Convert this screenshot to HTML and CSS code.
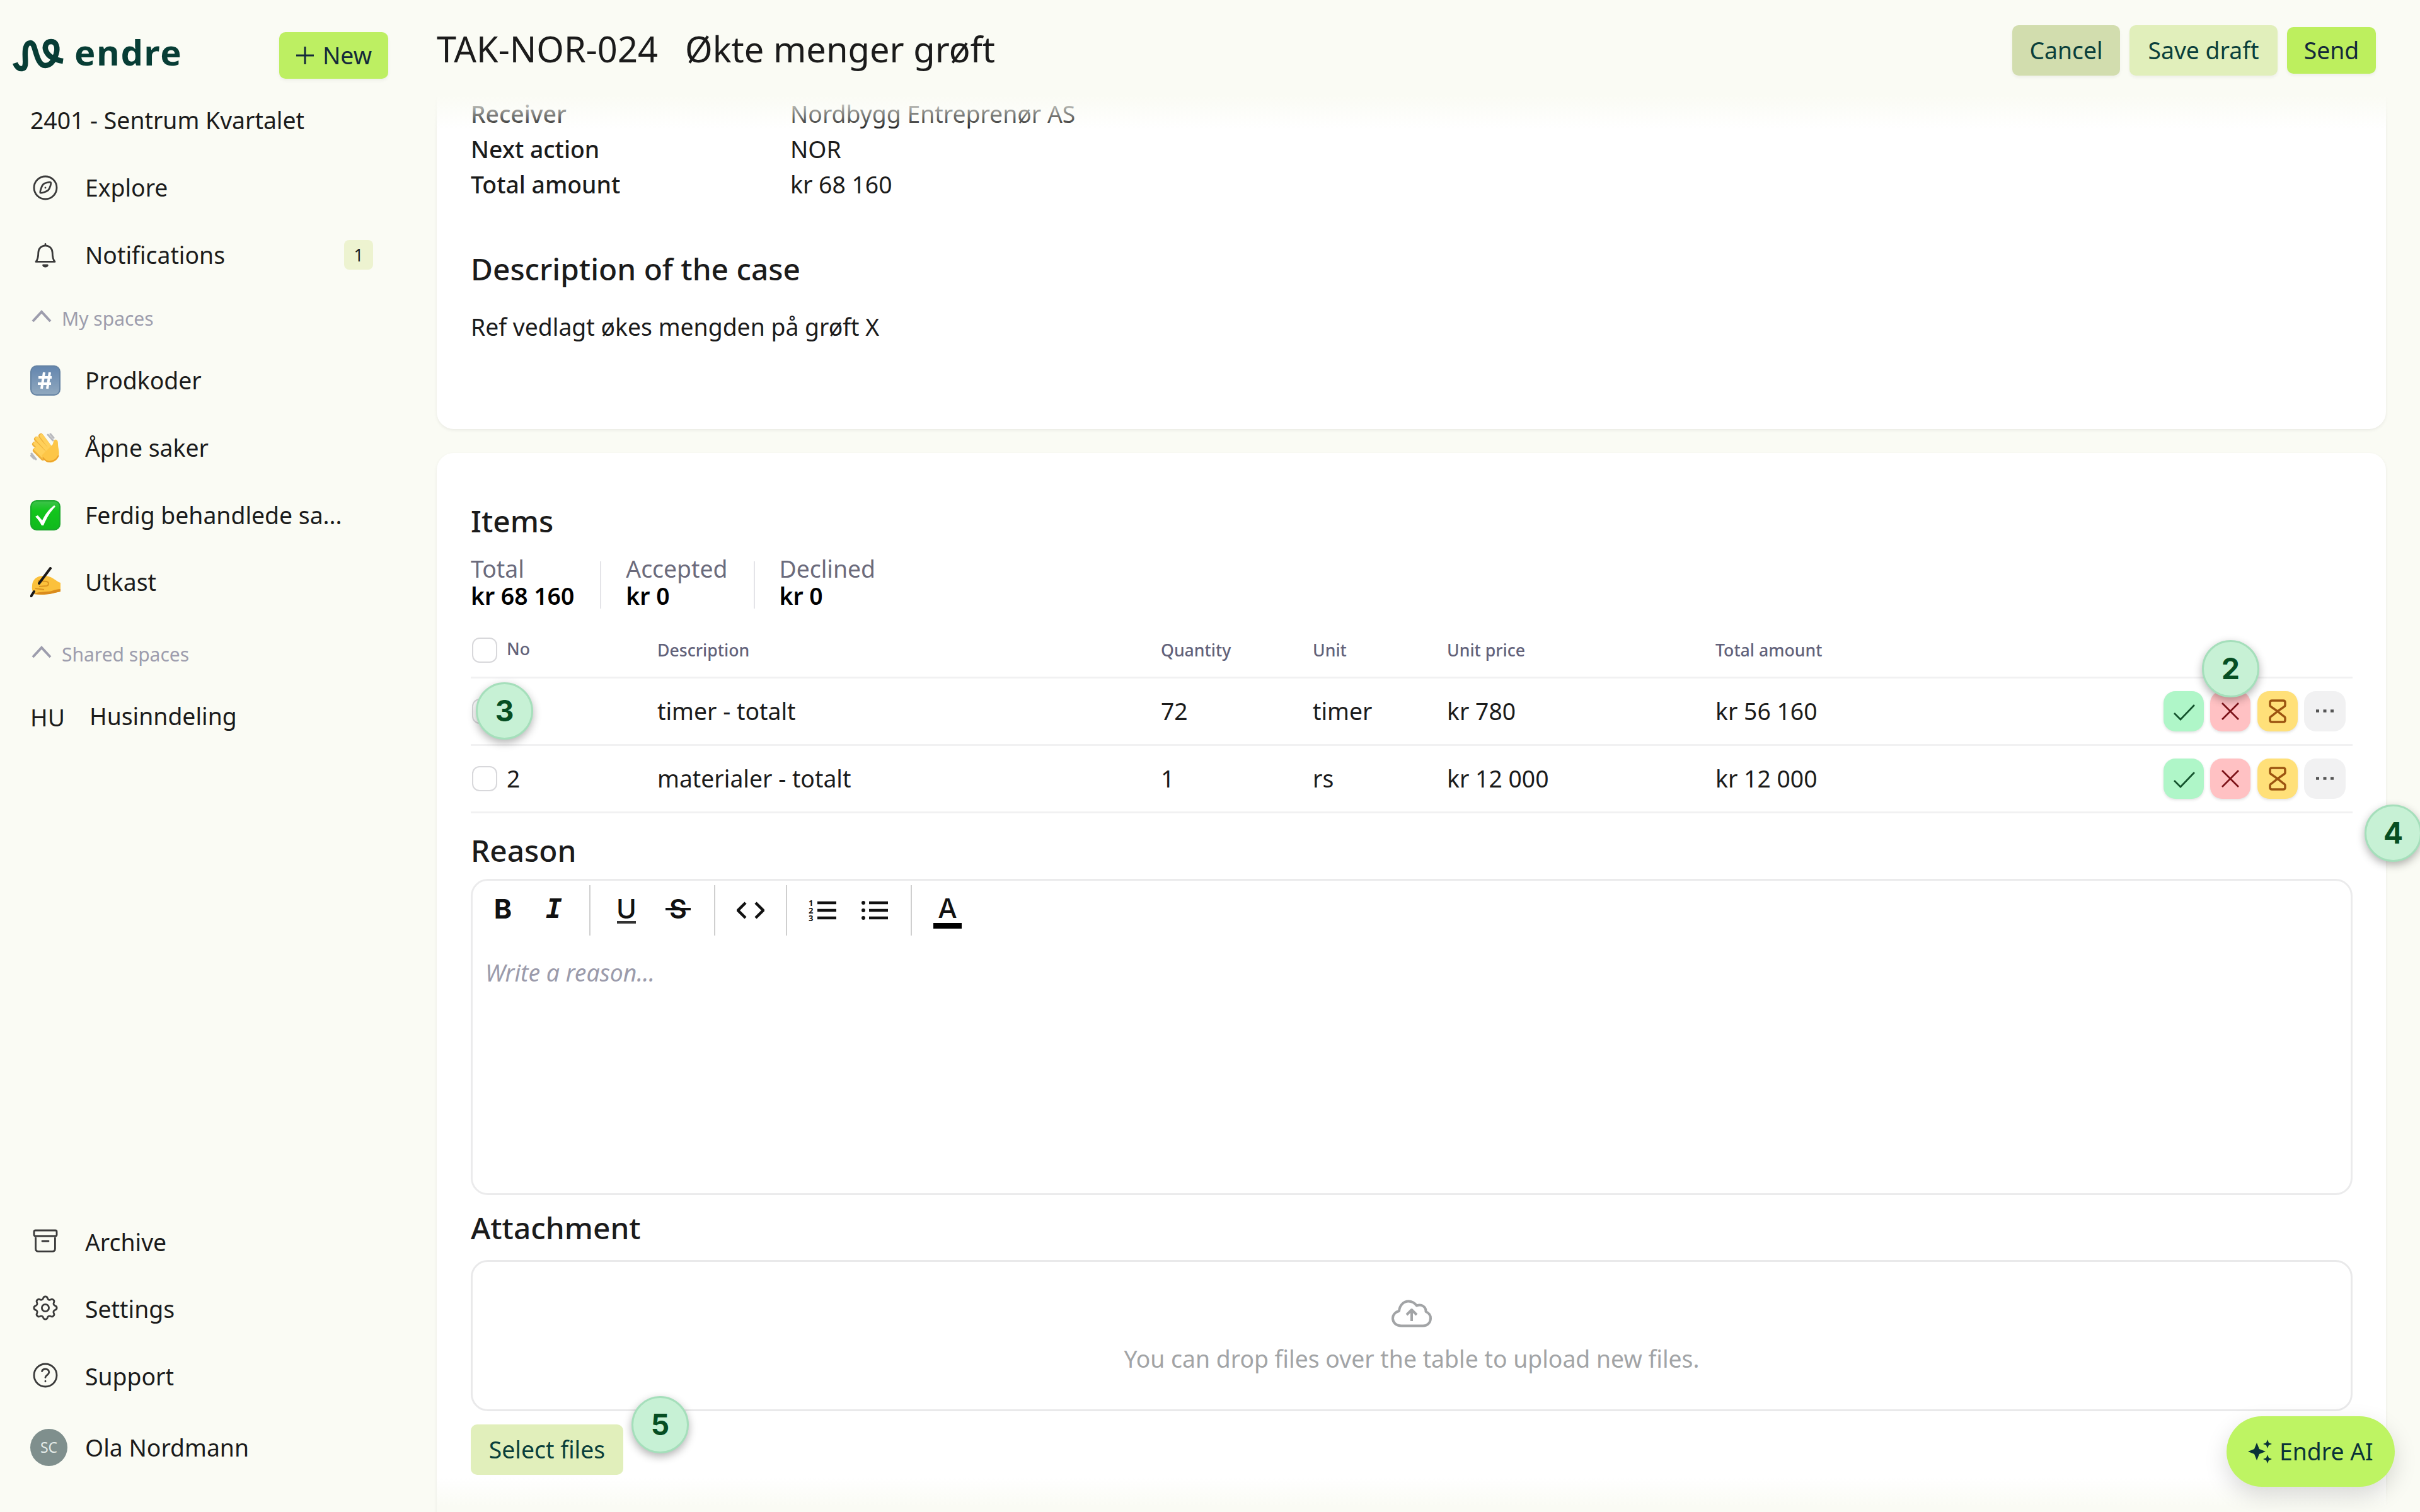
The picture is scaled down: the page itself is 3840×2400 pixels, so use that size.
FILE: index.html
```html
<!DOCTYPE html>
<html lang="en">
<head>
    <meta charset="utf-8">
    <title>TAK-NOR-024 Økte menger grøft</title>
    <link rel="stylesheet" href="styles.css">
</head>
<body>
    <div class="app">
        <aside class="sidebar">
            <div class="brand">
                <svg class="brand-mark" viewBox="0 0 80 54"><path d="M2 39c2 6 6 9.500 11 9 10-1 2-22 6-34 3-9 10-9 13-1 4 12 7 30 18 30 9 0 14-9 17-18 3-10 1-20-8-20-8 0-11 8-8 15 4 9 13 14 27 16"/></svg>
                <span class="brand-name">endre</span>
                <button class="btn btn-new">
                    <svg class="plus" viewBox="0 0 30 30"><path d="M15 1v28M1 15h28"/></svg>
                    New
                </button>
            </div>
            <div class="project">2401 - Sentrum Kvartalet</div>

            <a class="nav-item">
                <svg class="icon" viewBox="0 0 24 24"><circle cx="12" cy="12" r="9"/><path d="M16.2 7.8c-.6-.5-4.600.2-5.900 1.500s-2.800 6.100-2.300 6.700c.6.500 5-.8 6.300-2.100s2.500-5.500 1.900-6.100z"/><path d="M12 12h.01"/></svg>
                <span class="label">Explore</span>
            </a>
            <a class="nav-item">
                <svg class="icon" viewBox="0 0 24 24"><path d="M4.500 17.200h15c-1.500-1.700-1.900-3.500-1.900-7.200 0-3.300-2.400-5.600-5.600-5.600S6.400 6.700 6.400 10c0 3.700-.4 5.500-1.900 7.200zM10.300 20c.5 1.400 2.900 1.400 3.400 0zM12 4.400V3.200"/></svg>
                <span class="label">Notifications</span>
                <span class="count">1</span>
            </a>

            <div class="section my-spaces">
                <svg class="chevron" viewBox="0 0 32 20"><path d="M2 18L16 3l14 15"/></svg>
                My spaces
            </div>
            <a class="nav-item">
                <svg class="emoji" viewBox="0 0 48 48">
                    <defs><linearGradient id="blue" x2="0" y2="1"><stop offset="0" stop-color="#6385ae"/><stop offset="1" stop-color="#91a9bf"/></linearGradient></defs>
                    <rect x="1" y="1" width="46" height="46" rx="9" fill="url(#blue)" stroke="#6583a3" stroke-width="2"/>
                    <path d="M22 11l-4 26M31 11l-4 26M13 19h21M12 29h21" stroke="#fff" stroke-width="4" fill="none"/>
                </svg>
                <span class="label">Prodkoder</span>
            </a>
            <a class="nav-item">
                <svg class="emoji" viewBox="0 0 48 48">
                    <g fill="none" stroke-linecap="round">
                        <path d="M28 3l8 9M32 2l5 6M2 33l7 9M1 36l5 5" stroke="#b8b9bd" stroke-width="3"/>
                        <path d="M10 10l16 18M17 5l14 19M7 18l16 16M8 28l12 12" stroke="#eeb13c" stroke-width="8"/>
                        <path d="M11 9l16 18M18 5l14 19M8 17l16 16M9 26l12 12" stroke="#ffd05a" stroke-width="6"/>
                    </g>
                    <path d="M18 36L34 20c3-1 2-8 5-9 4-1 5 2 5 7 0 7 3 12 1 19-2 7-9 11-15 10-6 0-9-5-12-11z" fill="#fdc647"/>
                    <path d="M20 39c4 6 8 8 14 6 6-1 9-5 11-9" stroke="#eba22b" stroke-width="2" fill="none"/>
                </svg>
                <span class="label">Åpne saker</span>
            </a>
            <a class="nav-item">
                <svg class="emoji" viewBox="0 0 48 48">
                    <defs><linearGradient id="green" x2="0" y2="1"><stop offset="0" stop-color="#3ec24b"/><stop offset=".35" stop-color="#12c51c"/><stop offset="1" stop-color="#10b91d"/></linearGradient></defs>
                    <rect x="1" y="1" width="46" height="46" rx="9" fill="url(#green)" stroke="#1aa72a" stroke-width="2"/>
                    <path d="M8 26l4-2 7 8C24 22 29 15 38 8l2 2C32 18 26 28 21 40h-3C15 34 12 30 8 26z" fill="#fff"/>
                </svg>
                <span class="label">Ferdig behandlede sa...</span>
            </a>
            <a class="nav-item">
                <svg class="emoji" viewBox="0 0 48 48">
                    <path d="M3 30c0-7 4-13 11-15 8-2 16-1 22 3 5 3 8 6 12 7v14c-7 1-12 3-19 4-9 1-18 1-24 0 0-3-3-6-2-13z" fill="#fbc13c"/>
                    <path d="M6 43c8 1 18 1 25 0 6-1 11-3 17-4v-4c-10 0-12 4-22 4-7 1-14 0-20 4z" fill="#da8b1c"/>
                    <path d="M12 22l14 1c4 1 4 6 0 7l-12 1M8 34l14 2" stroke="#dc951f" stroke-width="2" fill="none"/>
                    <path d="M32 2L14 26M6 39l-5 8" stroke="#1c1a19" stroke-width="4" stroke-linecap="round"/>
                </svg>
                <span class="label">Utkast</span>
            </a>

            <div class="section shared-spaces">
                <svg class="chevron" viewBox="0 0 32 20"><path d="M2 18L16 3l14 15"/></svg>
                Shared spaces
            </div>
            <a class="nav-item">
                <span class="initials">HU</span>
                <span class="label">Husinndeling</span>
            </a>

            <div class="sidebar-bottom">
                <a class="nav-item">
                    <svg class="icon" viewBox="0 0 24 24"><rect x="3" y="3.500" width="18" height="4.500" rx="1"/><path d="M4.300 9.500v8.500c0 1.400.8 2.200 2.200 2.200h11c1.400 0 2.200-.8 2.200-2.200V9.500M9.500 12h5"/></svg>
                    <span class="label">Archive</span>
                </a>
                <a class="nav-item">
                    <svg class="icon" viewBox="0 0 24 24"><path d="M10.300 4.300c.5-1.800 2.900-1.800 3.400 0a1.700 1.700 0 0 0 2.600 1.100c1.500-.9 3.300.8 2.400 2.400a1.700 1.700 0 0 0 1 2.500c1.800.5 1.800 2.900 0 3.400a1.700 1.700 0 0 0-1 2.600c.9 1.500-.9 3.300-2.400 2.400a1.700 1.700 0 0 0-2.600 1c-.5 1.800-2.900 1.800-3.400 0a1.700 1.700 0 0 0-2.600-1c-1.500.9-3.300-.9-2.400-2.400a1.700 1.700 0 0 0-1-2.600c-1.800-.5-1.800-2.900 0-3.400a1.700 1.700 0 0 0 1-2.500c-.9-1.600.9-3.300 2.400-2.400 1 .6 2.300.1 2.600-1.100z"/><circle cx="12" cy="12" r="2.800"/></svg>
                    <span class="label">Settings</span>
                </a>
                <a class="nav-item">
                    <svg class="icon" viewBox="0 0 24 24"><circle cx="12" cy="12" r="9"/><path d="M9.300 8.800c.3-1.100 1.300-1.800 2.700-1.800 1.600 0 2.900 1 2.900 2.500 0 2.200-2.900 2.300-2.900 4.300M12 16.600v.3"/></svg>
                    <span class="label">Support</span>
                </a>
                <a class="nav-item user">
                    <span class="avatar">SC</span>
                    <span class="label">Ola Nordmann</span>
                </a>
            </div>
        </aside>

        <main class="main">
            <header class="topbar">
                <h1>TAK-NOR-024</h1>
                <h1>Økte menger grøft</h1>
                <div class="actions">
                    <button class="btn btn-cancel">Cancel</button>
                    <button class="btn btn-soft">Save draft</button>
                    <button class="btn btn-send">Send</button>
                </div>
            </header>

            <section class="card case">
                <dl class="facts">
                    <dt>Receiver</dt><dd>Nordbygg Entreprenør AS</dd>
                    <dt>Next action</dt><dd>NOR</dd>
                    <dt>Total amount</dt><dd>kr 68 160</dd>
                </dl>
                <h2>Description of the case</h2>
                <p>Ref vedlagt økes mengden på grøft X</p>
            </section>

            <section class="card items">
                <h2>Items</h2>
                <div class="summary">
                    <div class="sum"><span>Total</span><b>kr 68 160</b></div>
                    <div class="sum"><span>Accepted</span><b>kr 0</b></div>
                    <div class="sum"><span>Declined</span><b>kr 0</b></div>
                </div>

                <div class="table">
                    <div class="row head">
                        <div class="no"><i class="check"></i><span>No</span></div>
                        <div>Description</div>
                        <div>Quantity</div>
                        <div>Unit</div>
                        <div>Unit price</div>
                        <div>Total amount</div>
                    </div>
                    <div class="row">
                        <div class="no"><i class="check"></i></div>
                        <div>timer - totalt</div>
                        <div>72</div>
                        <div>timer</div>
                        <div>kr 780</div>
                        <div>kr 56 160</div>
                        <div class="tools">
                            <button class="tool accept"><svg viewBox="0 0 64 64"><path d="M17 35l10 10 22-23"/></svg></button>
                            <button class="tool decline"><svg viewBox="0 0 64 64"><path d="M19 19l26 26M45 19L19 45"/></svg></button>
                            <button class="tool wait"><svg viewBox="0 0 64 64"><path d="M20 18q0-3 3-3h18q3 0 3 3v4q0 2-2 3L32 32l10 8q2 1 2 3v3q0 3-3 3H23q-3 0-3-3v-3q0-2 2-3l10-8-10-7q-2-1-2-3z"/></svg></button>
                            <button class="tool more"><svg viewBox="0 0 64 64"><path d="M18 31.500h5M29.500 31.500h5M41 31.500h5"/></svg></button>
                        </div>
                    </div>
                    <div class="row">
                        <div class="no"><i class="check"></i><span>2</span></div>
                        <div>materialer - totalt</div>
                        <div>1</div>
                        <div>rs</div>
                        <div>kr 12 000</div>
                        <div>kr 12 000</div>
                        <div class="tools">
                            <button class="tool accept"><svg viewBox="0 0 64 64"><path d="M17 35l10 10 22-23"/></svg></button>
                            <button class="tool decline"><svg viewBox="0 0 64 64"><path d="M19 19l26 26M45 19L19 45"/></svg></button>
                            <button class="tool wait"><svg viewBox="0 0 64 64"><path d="M20 18q0-3 3-3h18q3 0 3 3v4q0 2-2 3L32 32l10 8q2 1 2 3v3q0 3-3 3H23q-3 0-3-3v-3q0-2 2-3l10-8-10-7q-2-1-2-3z"/></svg></button>
                            <button class="tool more"><svg viewBox="0 0 64 64"><path d="M18 31.500h5M29.500 31.500h5M41 31.500h5"/></svg></button>
                        </div>
                    </div>
                </div>

                <h2 class="reason-title">Reason</h2>
                <div class="editor">
                    <div class="toolbar">
                        <div class="group g1">
                            <span class="fmt bold">B</span>
                            <span class="fmt italic">I</span>
                        </div>
                        <div class="group g2">
                            <span class="fmt underline">U</span>
                            <span class="fmt strike">S</span>
                        </div>
                        <div class="group g3">
                            <svg class="fmt" viewBox="0 0 44 44"><path d="M14 10L2 22l12 12M30 10l12 12-12 12"/></svg>
                        </div>
                        <div class="group g4">
                            <svg class="fmt" viewBox="0 0 44 44"><path d="M14 10h30M14 22h30M14 34h30"/><text x="0" y="15">1</text><text x="0" y="27">2</text><text x="0" y="39">3</text></svg>
                            <svg class="fmt" viewBox="0 0 44 44"><path d="M13 10h30M13 22h30M13 34h30"/><g class="dots"><circle cx="4" cy="10" r="3"/><circle cx="4" cy="22" r="3"/><circle cx="4" cy="34" r="3"/></g></svg>
                        </div>
                        <div class="group g5">
                            <span class="fmt color">A</span>
                        </div>
                    </div>
                    <div class="placeholder">Write a reason...</div>
                </div>

                <h2 class="attachment-title">Attachment</h2>
                <div class="dropzone">
                    <svg class="cloud" viewBox="0 0 64 44"><path d="M16 41.500C7 41.500 2 36 2 29.500 2 24 6 19.500 12 18 13 9 19 2.500 27 2.500c6 0 10 3 13 7 8-3 15 2 14.500 9.500 5 2 7.500 6 7.500 10.500 0 7-5 12-12 12zM32 34V17M24 24l8-8 8 8"/></svg>
                    <span>You can drop files over the table to upload new files.</span>
                </div>
                <button class="btn btn-soft btn-files">Select files</button>
            </section>
        </main>

        <div class="pin pin-2">2</div>
        <div class="pin pin-3">3</div>
        <div class="pin pin-4">4</div>
        <div class="pin pin-5">5</div>

        <button class="ai">
            <svg viewBox="0 0 38 38"><path d="M14 5l4 10 10 4-10 4-4 10-4-10L0 19l10-4zM31 0l2 5 5 2-5 2-2 5-2-5-5-2 5-2zM31 24l2 5 5 2-5 2-2 5-2-5-5-2 5-2z"/></svg>
            Endre AI
        </button>
    </div>
</body>
</html>
```

FILE: styles.css
```css
* {
    box-sizing: border-box;
}

body {
    margin: 0;
    background: #fafbf4;
    color: #1b1b1b;
    font-family: "Noto Sans", sans-serif;
    font-size: 37.33px;
    line-height: 56px;
}

h1, h2, p, dl, dd {
    margin: 0;
}

button {
    border: none;
    padding: 0;
    font: inherit;
}

svg {
    flex: none;
}

.app {
    position: relative;
    display: flex;
    width: 3840px;
    height: 2400px;
    overflow: hidden;
}

/* Sidebar */
.sidebar {
    display: flex;
    flex-direction: column;
    width: 693px;
    padding-bottom: 49px;
}

.brand {
    display: flex;
    align-items: flex-start;
    height: 138px;
    padding: 51px 77px 0 22px;
}

.brand-mark {
    width: 80px;
    height: 54px;
    margin-top: 10px;
    overflow: visible;
    fill: none;
    stroke: #073d35;
    stroke-width: 8.500;
}

.brand-name {
    margin-left: 16px;
    margin-top: 3px;
    color: #073d35;
    font-size: 56px;
    font-weight: 700;
    letter-spacing: 1.800px;
}

.btn {
    display: flex;
    align-items: center;
    justify-content: center;
    height: 80px;
    border-radius: 10px;
    color: #0a3f3b;
    box-shadow: 0 3px 5px rgba(0, 0, 0, 0.05);
}

.btn-new {
    width: 173px;
    height: 74px;
    margin-left: auto;
    gap: 13px;
    background: #bdef62;
    color: #14293a;
}

.plus {
    width: 30px;
    height: 30px;
    fill: none;
    stroke: #14293a;
    stroke-width: 3;
}

.project {
    height: 106.67px;
    padding-left: 48px;
    line-height: 106.67px;
}

.nav-item {
    display: flex;
    align-items: center;
    height: 106.67px;
    padding-left: 48px;
}

.nav-item .label {
    margin-left: 39px;
}

.icon {
    width: 48px;
    height: 48px;
    fill: none;
    stroke: #3a3a3a;
    stroke-width: 1.4;
    stroke-linecap: round;
    stroke-linejoin: round;
}

.emoji {
    width: 48px;
    height: 48px;
}

.count {
    width: 46px;
    height: 47px;
    margin-left: auto;
    margin-right: 101px;
    border-radius: 8px;
    background: #edf3d0;
    font-size: 26.67px;
    line-height: 47px;
    text-align: center;
}

.section {
    display: flex;
    align-items: center;
    color: #9d9dad;
    font-size: 30px;
    padding-left: 50px;
}

.my-spaces {
    height: 93px;
    padding-top: 4px;
}

.shared-spaces {
    height: 106px;
    padding-top: 16px;
}

.chevron {
    width: 32px;
    height: 20px;
    margin: -8px 16px 0 0;
    fill: none;
    stroke: #9d9dad;
    stroke-width: 4;
}

.initials {
    width: 55px;
    padding-top: 4px;
}

.sidebar-bottom {
    margin-top: auto;
}

.sidebar-bottom .icon {
    margin-top: -4px;
}

.user {
    margin-top: 6px;
}

.avatar {
    width: 59px;
    height: 59px;
    border-radius: 50%;
    background: #7f8f8d;
    color: #e4ebe8;
    font-size: 23px;
    line-height: 59px;
    text-align: center;
}

.user .label {
    margin-left: 28px;
}

/* Main column */
.main {
    position: relative;
    flex: 1;
    padding-right: 54px;
}

.main::after {
    content: "";
    position: absolute;
    left: 0;
    right: 0;
    bottom: 0;
    height: 54px;
    background: linear-gradient(rgba(250, 251, 244, 0), #fafbf4 85%);
}

.topbar {
    display: flex;
    align-items: center;
    height: 150px;
    padding: 3px 16px 0 0;
}

h1 {
    margin-right: 43px;
    font-size: 56px;
    font-weight: 400;
}

.actions {
    display: flex;
    align-items: center;
    margin-left: auto;
    margin-top: 7px;
    gap: 15px;
}

.btn-cancel {
    width: 171px;
    background: #d2ddae;
}

.btn-soft {
    width: 235px;
    background: #e1efbb;
}

.btn-send {
    width: 141px;
    height: 74px;
    background: #bdef5e;
    color: #14293a;
}

.card {
    padding: 0 53px 0 54px;
    border-radius: 27px;
    background: #fff;
    box-shadow: 0 2px 5px rgba(0, 0, 0, 0.07);
}

.case {
    position: relative;
    height: 531px;
    padding-top: 3px;
    border-radius: 0 0 27px 27px;
}

.case::before {
    content: "";
    position: absolute;
    left: -6px;
    right: -6px;
    top: -6px;
    height: 62px;
    background: linear-gradient(#fafbf4 12%, rgba(250, 251, 244, 0));
}

.facts {
    display: grid;
    grid-template-columns: 507px 1fr;
}

dt, h2 {
    font-weight: 500;
}

h2 {
    font-size: 47.800px;
}

.case h2 {
    margin-top: 78px;
}

.case p {
    margin-top: 36px;
}

.items {
    height: 1720px;
    margin-top: 38px;
    padding-top: 80px;
}

.summary {
    display: flex;
    height: 86px;
    margin-top: 26px;
}

.sum {
    display: flex;
    flex-direction: column;
    line-height: 43px;
    padding-right: 41px;
}

.sum + .sum {
    position: relative;
    padding-left: 41px;
}

.sum + .sum::before {
    content: "";
    position: absolute;
    left: 0;
    top: 10px;
    width: 2px;
    height: 75px;
    background: #e4e4e8;
}

.sum span {
    color: #6b6b7c;
}

.sum b {
    font-weight: 600;
    color: #000;
}

/* Items table */
.table {
    margin-top: 23px;
}

.row {
    display: grid;
    grid-template-columns: 296px 799px 241px 213px 426px 1fr auto;
    align-items: center;
    height: 107px;
    border-bottom: 3px solid #f1f1f2;
}

.head {
    height: 87px;
    color: #62627a;
    font-size: 26.67px;
    font-weight: 500;
}

.no {
    display: flex;
    align-items: center;
    gap: 15px;
}

.head .no span {
    margin-top: -4px;
}

.check {
    width: 40px;
    height: 40px;
    margin-left: 2px;
    border: 2.500px solid #d8d8db;
    border-radius: 12px;
    background: #fff;
}

.tools {
    display: flex;
    gap: 10.500px;
    padding-right: 11px;
}

.tool {
    width: 64px;
    height: 64px;
    border-radius: 19px;
    box-shadow: 0 2px 4px rgba(0, 0, 0, 0.12);
}

.tool svg {
    display: block;
    width: 64px;
    height: 64px;
    fill: none;
    stroke-width: 2.700;
}

.accept {
    background: #aff6c8;
    stroke: #14532d;
}

.decline {
    background: #ffc1c3;
    stroke: #7c1218;
}

.wait {
    background: #ffe079;
    stroke: #9c5410;
}

.wait svg {
    stroke-width: 3.500;
}

.more {
    width: 66px;
    background: #f1f1f2;
    stroke: #555;
    box-shadow: none;
}

.more svg {
    width: 66px;
    stroke-width: 4.500;
}

/* Rich text editor */
.reason-title {
    margin-top: 31px;
}

.editor {
    height: 502px;
    margin-top: 17px;
    border: 3px solid #ebebec;
    border-radius: 27px;
}

.toolbar {
    display: flex;
    height: 80px;
    margin-top: 7px;
}

.group {
    display: flex;
    align-items: center;
    justify-content: space-between;
    border-right: 2px solid #cfcfcf;
}

.g1 {
    width: 187px;
    padding: 0 34px 0 26px;
}

.g2 {
    width: 198px;
    padding: 0 35px;
}

.g3 {
    width: 114px;
    padding: 0 34px;
}

.g4 {
    width: 198px;
    padding: 0 35px 0 34px;
}

.g5 {
    border-right: none;
    padding-left: 34px;
}

.fmt {
    width: 44px;
    height: 44px;
    color: #111;
    line-height: 44px;
    text-align: center;
}

svg.fmt {
    fill: none;
    stroke: #111;
    stroke-width: 4.500;
}

.fmt text {
    fill: #111;
    stroke: none;
    font-size: 13px;
    font-weight: 700;
}

.fmt .dots {
    fill: #111;
    stroke: none;
}

.bold {
    font: 700 43px/38px Inter, sans-serif;
}

.italic {
    font: italic 700 43px/38px "DejaVu Sans Mono", monospace;
}

.underline {
    position: relative;
    font: 500 43px/38px Inter, sans-serif;
}

.underline::after {
    content: "";
    position: absolute;
    left: 7px;
    top: 39px;
    width: 30px;
    height: 4px;
    background: #333;
}

.strike {
    position: relative;
    font: 600 43px/38px Inter, sans-serif;
}

.strike::after {
    content: "";
    position: absolute;
    left: 2px;
    top: 18px;
    width: 40px;
    height: 4px;
    background: #111;
}

.color {
    border-bottom: 9px solid #000;
    width: 45px;
    height: 50px;
    font: 500 43px/35px Inter, sans-serif;
    margin-top: 7px;
}

.placeholder {
    padding-left: 20px;
    margin-top: 31px;
    color: #9b9bab;
    font-style: italic;
}

.attachment-title {
    margin-top: 24px;
}

.dropzone {
    display: flex;
    flex-direction: column;
    align-items: center;
    height: 240px;
    margin-top: 23px;
    padding-top: 60px;
    border: 3px solid #e9e9ea;
    border-radius: 27px;
    color: #a2a4a6;
}

.cloud {
    width: 64px;
    height: 44px;
    margin-bottom: 22px;
    fill: none;
    stroke: #a2a4a6;
    stroke-width: 4;
    stroke-linejoin: round;
}

.btn-files {
    width: 242px;
    margin-top: 21px;
    box-shadow: none;
}

/* Numbered guide pins */
.pin {
    position: absolute;
    width: 91px;
    height: 91px;
    border: 3px solid #a5dfbb;
    border-radius: 50%;
    background: #c7f1d5;
    box-shadow: 0 5px 14px rgba(0, 0, 0, 0.3);
    color: #064e22;
    font: 700 46px/84px Inter, sans-serif;
    text-align: center;
}

.pin-2 {
    left: 3494px;
    top: 1016px;
}

.pin-3 {
    left: 755px;
    top: 1083px;
}

.pin-4 {
    left: 3752px;
    top: 1277px;
}

.pin-5 {
    left: 1002px;
    top: 2216px;
}

.ai {
    position: absolute;
    left: 3533px;
    top: 2248px;
    display: flex;
    align-items: center;
    width: 267px;
    height: 112px;
    padding-left: 34px;
    gap: 12px;
    border-radius: 56px;
    background: #bef463;
    box-shadow: 0 14px 36px rgba(0, 0, 0, 0.15);
    color: #0a3238;
    white-space: nowrap;
}

.ai svg {
    width: 38px;
    height: 38px;
    fill: #0a3238;
}
```
